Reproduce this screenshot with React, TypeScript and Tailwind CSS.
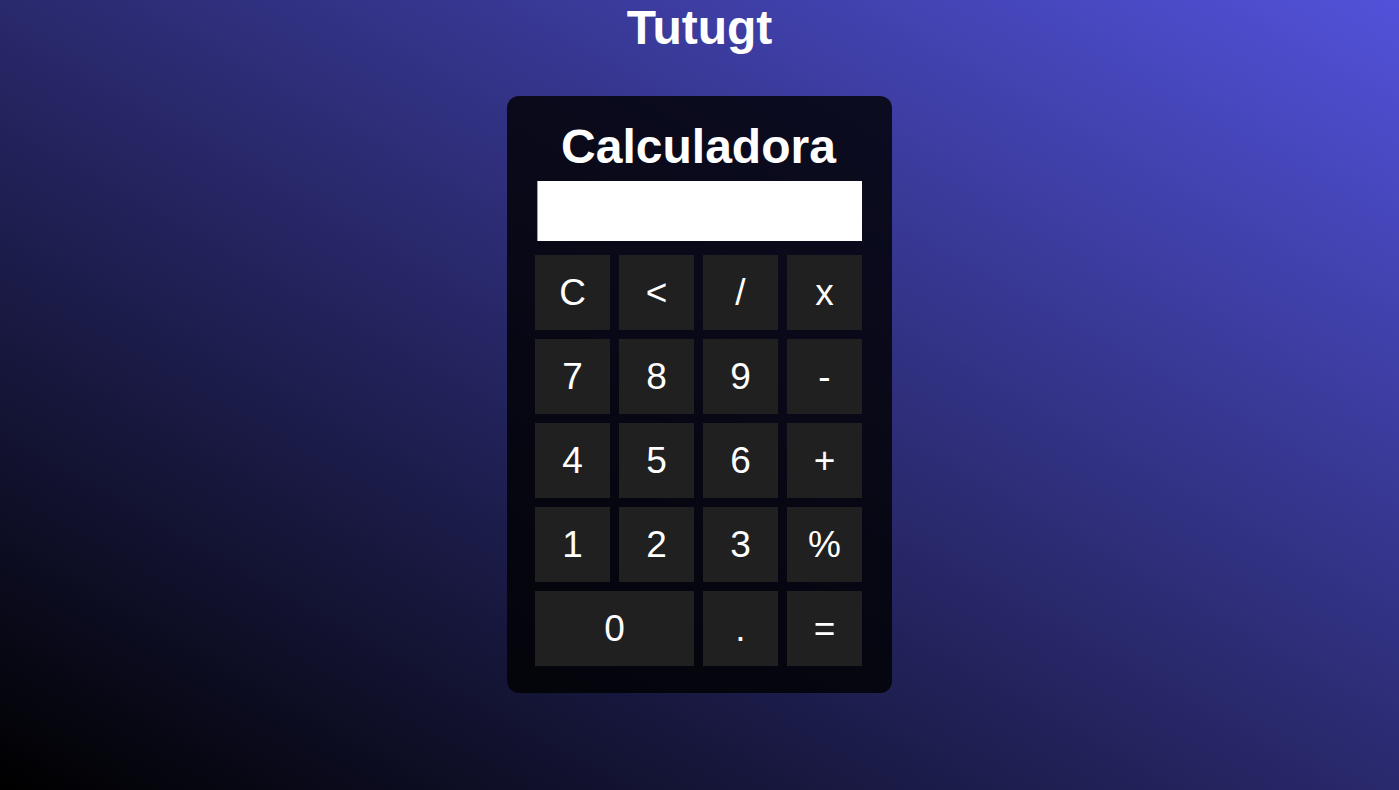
import React from "react";

const keys: { label: string; wide?: boolean }[] = [
  { label: "C" }, { label: "<" }, { label: "/" }, { label: "x" },
  { label: "7" }, { label: "8" }, { label: "9" }, { label: "-" },
  { label: "4" }, { label: "5" }, { label: "6" }, { label: "+" },
  { label: "1" }, { label: "2" }, { label: "3" }, { label: "%" },
  { label: "0", wide: true }, { label: "." }, { label: "=" },
];

export default function App() {
  return (
    <div
      className="min-h-screen w-full bg-[linear-gradient(to_top_right,#000000,#5252da)] flex flex-col items-center text-white"
      style={{ fontFamily: '"Liberation Sans", Arial, sans-serif' }}
    >
      <h1 className="text-[48px] font-bold leading-[55px] m-0">Tutugt</h1>
      <div className="mt-[41px] w-[385px] h-[597px] bg-black/80 rounded-[12px] pt-[23px] pl-[28px] pr-[30px] flex flex-col">
        <h2 className="text-[48px] font-bold leading-[55px] text-center m-0">Calculadora</h2>
        <div className="mt-[7px] ml-[2px] w-[325px] h-[60px] bg-white border-l border-gray-400" />
        <div className="mt-[14px] grid grid-cols-[repeat(4,75px)] auto-rows-[75px] gap-[9px]">
          {keys.map((k) => (
            <button
              key={k.label}
              className={`bg-[#202020] text-white text-[37px] leading-none flex items-center justify-center ${k.wide ? "col-span-2" : ""}`}
            >
              {k.label}
            </button>
          ))}
        </div>
      </div>
    </div>
  );
}
